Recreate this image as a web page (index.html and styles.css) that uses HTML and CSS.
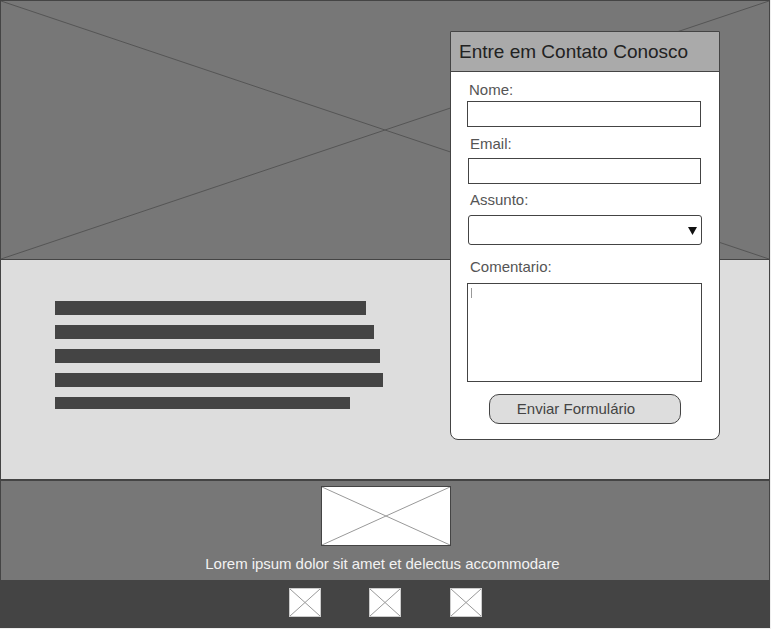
FILE: index.html
```html
<!DOCTYPE html>
<html lang="pt">
<head>
<meta charset="utf-8">
<title>Contato</title>
<link rel="stylesheet" href="styles.css">
</head>
<body>
<div class="frame">
  <header class="hero">
    <svg class="xlines" viewBox="0 0 100 100" preserveAspectRatio="none"><line x1="0" y1="0" x2="100" y2="100"/><line x1="100" y1="0" x2="0" y2="100"/></svg>
  </header>
  <section class="content">
    <div class="textbars">
      <div class="bar" style="width:311px"></div>
      <div class="bar" style="width:319px"></div>
      <div class="bar" style="width:325px"></div>
      <div class="bar" style="width:328px"></div>
      <div class="bar bar-last" style="width:295px"></div>
    </div>
  </section>
  <footer class="footer">
    <div class="ph ph-logo"><svg viewBox="0 0 100 100" preserveAspectRatio="none"><line x1="0" y1="0" x2="100" y2="100"/><line x1="100" y1="0" x2="0" y2="100"/></svg></div>
    <p class="footer-text">Lorem ipsum dolor sit amet et delectus accommodare</p>
  </footer>
  <div class="bottombar">
    <div class="ph ph-icon"><svg viewBox="0 0 100 100" preserveAspectRatio="none"><line x1="0" y1="0" x2="100" y2="100"/><line x1="100" y1="0" x2="0" y2="100"/></svg></div>
    <div class="ph ph-icon"><svg viewBox="0 0 100 100" preserveAspectRatio="none"><line x1="0" y1="0" x2="100" y2="100"/><line x1="100" y1="0" x2="0" y2="100"/></svg></div>
    <div class="ph ph-icon"><svg viewBox="0 0 100 100" preserveAspectRatio="none"><line x1="0" y1="0" x2="100" y2="100"/><line x1="100" y1="0" x2="0" y2="100"/></svg></div>
  </div>

  <form class="panel">
    <div class="panel-head">Entre em Contato Conosco</div>
    <div class="panel-body">
      <label class="lbl lbl-nome">Nome:</label>
      <div class="field f-nome"></div>
      <label class="lbl lbl-email">Email:</label>
      <div class="field f-email"></div>
      <label class="lbl lbl-assunto">Assunto:</label>
      <div class="field f-select"><svg class="arrow" viewBox="0 0 10 10"><polygon points="0,1 10,1 5,10"/></svg></div>
      <label class="lbl lbl-coment">Comentario:</label>
      <div class="field f-area"><span class="caret"></span></div>
      <div class="btn-row"><div class="btn">Enviar Formulário</div></div>
    </div>
  </form>
</div>
</body>
</html>
```
FILE: styles.css
```css
html, body { margin: 0; padding: 0; }
body {
  background: #eeeeee;
  font-family: "Liberation Sans", Arial, sans-serif;
  width: 771px;
  height: 629px;
  overflow: hidden;
}
.frame {
  position: relative;
  width: 768px;
  border: 1px solid #444;
  border-bottom: none;
  display: flex;
  flex-direction: column;
}
.hero {
  position: relative;
  height: 258px;
  background: #777;
  border-bottom: 1px solid #444;
}
.xlines {
  position: absolute;
  inset: 0;
  width: 100%;
  height: 100%;
}
.xlines line { stroke: #555; stroke-width: 1; vector-effect: non-scaling-stroke; }
.content {
  height: 219px;
  background: #ddd;
  border-bottom: 2px solid #444;
  box-sizing: content-box;
}
.textbars {
  padding: 41px 0 0 54px;
  display: flex;
  flex-direction: column;
  gap: 10px;
}
.bar { height: 14px; background: #444; }
.bar-last { height: 12px; }
.footer {
  height: 99px;
  background: #777;
  display: flex;
  flex-direction: column;
  align-items: center;
}
.ph { background: #fff; box-sizing: border-box; }
.ph svg { display: block; width: 100%; height: 100%; }
.ph line { stroke: #999; stroke-width: 1; vector-effect: non-scaling-stroke; }
.ph-logo {
  width: 130px;
  height: 60px;
  border: 1px solid #444;
  margin-top: 5px;
  margin-left: 1px;
}
.footer-text {
  margin: 9px 0 0 -5px;
  color: #f2f2f2;
  font-size: 15px;
  line-height: 18px;
  letter-spacing: -0.05px;
}
.bottombar {
  height: 48px;
  background: #444;
  display: flex;
  justify-content: center;
  gap: 48px;
  padding-top: 8px;
  box-sizing: border-box;
}
.ph-icon {
  width: 32px;
  height: 29px;
  border: 1px solid #ccc;
}
.bottombar .ph-icon:nth-child(3) { margin-left: 1px; }

.panel {
  position: absolute;
  left: 449px;
  top: 30px;
  width: 270px;
  height: 409px;
  box-sizing: border-box;
  margin: 0;
  border: 1px solid #444;
  border-radius: 0 0 8px 8px;
  background: #fff;
  display: flex;
  flex-direction: column;
}
.panel-head {
  height: 39px;
  background: #aaa;
  border-bottom: 1px solid #444;
  color: #222;
  font-size: 19px;
  line-height: 40px;
  padding-left: 8px;
  white-space: nowrap;
}
.panel-body {
  display: flex;
  flex-direction: column;
  padding-left: 16px;
}
.lbl {
  display: block;
  font-size: 15px;
  line-height: 16px;
  color: #555;
  padding-left: 2px;
}
.lbl-nome { margin-top: 10px; }
.lbl-email { margin-top: 9px; padding-left: 3px; }
.lbl-assunto { margin-top: 8px; padding-left: 3px; }
.lbl-coment { margin-top: 14px; padding-left: 3px; }
.field {
  position: relative;
  box-sizing: border-box;
  border: 1px solid #444;
  background: #fff;
  width: 234px;
}
.f-nome { margin-top: 3px; height: 26px; }
.f-email { margin-top: 6px; height: 26px; margin-left: 1px; width: 233px; }
.f-select { margin-top: 7px; height: 30px; margin-left: 1px; border-radius: 3px; }
.arrow {
  position: absolute;
  right: 4px;
  top: 10px;
  width: 9px;
  height: 9px;
}
.arrow polygon { fill: #111; }
.f-area { margin-top: 8px; height: 99px; width: 235px; }
.caret {
  position: absolute;
  left: 3px;
  top: 4px;
  width: 1px;
  height: 10px;
  background: #999;
}
.btn-row { padding-left: 22px; margin-top: 12px; }
.btn {
  width: 192px;
  height: 30px;
  box-sizing: border-box;
  border: 1px solid #444;
  border-radius: 10px;
  background: #ddd;
  color: #444;
  font-size: 15px;
  line-height: 28px;
  text-align: center;
  padding-right: 18px;
}
```
